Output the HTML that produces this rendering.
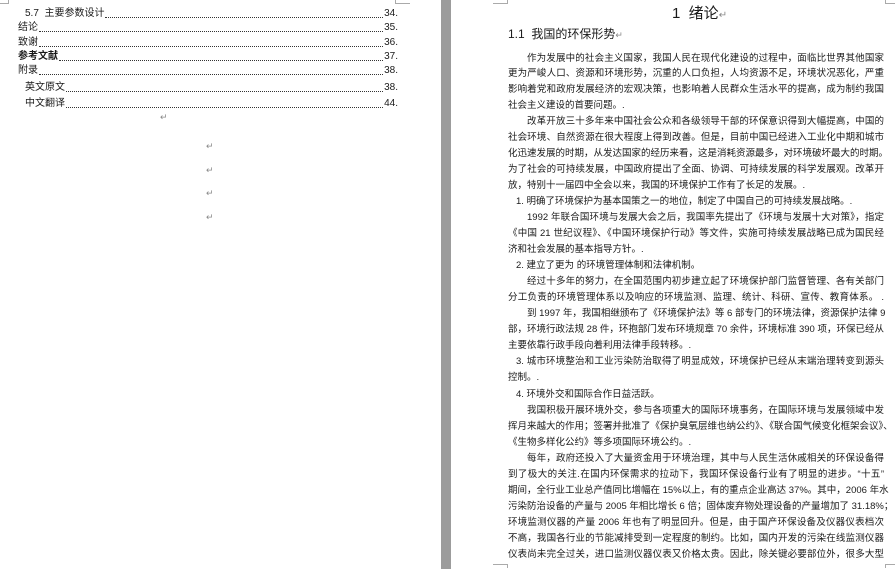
<!DOCTYPE html>
<html><head><meta charset="utf-8"><style>
body{margin:0;width:895px;height:569px;overflow:hidden;background:#fff;position:relative;font-family:"Liberation Sans","Noto Sans CJK SC",sans-serif;color:#1a1a1a}
.gap{position:absolute;left:441px;top:0;width:10px;height:569px;background:#9c9c9c}
.l{position:absolute;font-size:9.5px;line-height:12px;white-space:nowrap}
.f{text-align:justify;text-align-last:justify;width:376px;left:508px}
.fi{text-align:justify;text-align-last:justify;width:357px;left:527px}
.toc{position:absolute;display:flex;align-items:flex-end;font-size:10px;line-height:12px;right:497px;white-space:nowrap}
.toc .d{flex:1;border-bottom:1px dotted #333;margin:0 1px 2px}
.rm{position:absolute;color:#888;font-size:9px}
.c{position:absolute;border-color:#aaa;border-style:solid;width:14px;height:3px}
</style></head><body>
<div class="gap"></div>
<div class="c" style="left:0;top:0;border-width:0 1px 1px 0;width:8px"></div>
<div class="c" style="left:395px;top:0;border-width:0 0 1px 1px"></div>
<div class="c" style="left:493px;top:0;border-width:0 1px 1px 0"></div>
<div class="c" style="left:885px;top:0;border-width:0 0 1px 1px"></div>
<div class="c" style="left:493px;top:564px;border-width:1px 1px 0 0"></div>
<div class="c" style="left:885px;top:564px;border-width:1px 0 0 1px"></div>

<div class="toc" style="left:25px;top:8px"><span>5.7&nbsp; 主要参数设计</span><span class="d"></span><span>34.</span></div>
<div class="toc" style="left:18px;top:22px"><span>结论</span><span class="d"></span><span>35.</span></div>
<div class="toc" style="left:18px;top:37px"><span>致谢</span><span class="d"></span><span>36.</span></div>
<div class="toc" style="left:18px;top:51px"><span style="font-weight:bold">参考文献</span><span class="d"></span><span>37.</span></div>
<div class="toc" style="left:18px;top:65px"><span>附录</span><span class="d"></span><span>38.</span></div>
<div class="toc" style="left:25px;top:82px"><span>英文原文</span><span class="d"></span><span>38.</span></div>
<div class="toc" style="left:25px;top:98px"><span>中文翻译</span><span class="d"></span><span>44.</span></div>
<div class="rm" style="left:160px;top:112px">↵</div>
<div class="rm" style="left:206px;top:141px">↵</div>
<div class="rm" style="left:206px;top:165px">↵</div>
<div class="rm" style="left:206px;top:188px">↵</div>
<div class="rm" style="left:206px;top:212px">↵</div>

<div class="l" style="left:672px;top:5px;font-size:15px;line-height:18px">1&nbsp; 绪论<span style="color:#888;font-size:10px">↵</span></div>
<div class="l" style="left:508px;top:27px;font-size:12px;line-height:14px">1.1&nbsp; 我国的环保形势<span style="color:#888;font-size:9px">↵</span></div>

<div class="l fi" style="top:53px">作为发展中的社会主义国家，我国人民在现代化建设的过程中，面临比世界其他国家</div>
<div class="l f" style="top:68px">更为严峻人口、资源和环境形势，沉重的人口负担，人均资源不足，环境状况恶化，严重</div>
<div class="l f" style="top:84px">影响着党和政府发展经济的宏观决策，也影响着人民群众生活水平的提高，成为制约我国</div>
<div class="l" style="left:508px;top:100px">社会主义建设的首要问题。.</div>
<div class="l fi" style="top:116px">改革开放三十多年来中国社会公众和各级领导干部的环保意识得到大幅提高，中国的</div>
<div class="l f" style="top:132px">社会环境、自然资源在很大程度上得到改善。但是，目前中国已经进入工业化中期和城市</div>
<div class="l f" style="top:148px">化迅速发展的时期，从发达国家的经历来看，这是消耗资源最多，对环境破坏最大的时期。</div>
<div class="l f" style="top:164px">为了社会的可持续发展，中国政府提出了全面、协调、可持续发展的科学发展观。改革开</div>
<div class="l" style="left:508px;top:180px">放，特别十一届四中全会以来，我国的环境保护工作有了长足的发展。.</div>
<div class="l" style="left:516px;top:196px">1. 明确了环境保护为基本国策之一的地位，制定了中国自己的可持续发展战略。.</div>
<div class="l fi" style="top:212px">1992 年联合国环境与发展大会之后，我国率先提出了《环境与发展十大对策》，指定</div>
<div class="l f" style="top:228px">《中国 21 世纪议程》、《中国环境保护行动》等文件，实施可持续发展战略已成为国民经</div>
<div class="l" style="left:508px;top:244px">济和社会发展的基本指导方针。.</div>
<div class="l" style="left:516px;top:260px">2. 建立了更为 的环境管理体制和法律机制。</div>
<div class="l fi" style="top:276px">经过十多年的努力，在全国范围内初步建立起了环境保护部门监督管理、各有关部门</div>
<div class="l f" style="top:292px">分工负责的环境管理体系以及响应的环境监测、监理、统计、科研、宣传、教育体系。 .</div>
<div class="l fi" style="top:308px">到 1997 年，我国相继颁布了《环境保护法》等 6 部专门的环境法律，资源保护法律 9</div>
<div class="l f" style="top:324px">部，环境行政法规 28 件，环抱部门发布环境规章 70 余件，环境标准 390 项，环保已经从</div>
<div class="l" style="left:508px;top:340px">主要依靠行政手段向着利用法律手段转移。.</div>
<div class="l" style="left:516px;top:356px;width:368px;text-align:justify;text-align-last:justify">3. 城市环境整治和工业污染防治取得了明显成效，环境保护已经从末端治理转变到源头</div>
<div class="l" style="left:508px;top:372px">控制。.</div>
<div class="l" style="left:516px;top:389px">4. 环境外交和国际合作日益活跃。</div>
<div class="l fi" style="top:405px">我国积极开展环境外交，参与各项重大的国际环境事务，在国际环境与发展领域中发</div>
<div class="l f" style="top:421px">挥月来越大的作用；签署并批准了《保护臭氧层维也纳公约》、《联合国气候变化框架会议》、</div>
<div class="l" style="left:508px;top:437px">《生物多样化公约》等多项国际环境公约。.</div>
<div class="l fi" style="top:453px">每年，政府还投入了大量资金用于环境治理，其中与人民生活休戚相关的环保设备得</div>
<div class="l f" style="top:469px">到了极大的关注.在国内环保需求的拉动下，我国环保设备行业有了明显的进步。“十五”</div>
<div class="l f" style="top:485px">期间，全行业工业总产值同比增幅在 15%以上，有的重点企业高达 37%。其中，2006 年水</div>
<div class="l f" style="top:501px">污染防治设备的产量与 2005 年相比增长 6 倍；固体废弃物处理设备的产量增加了 31.18%；</div>
<div class="l f" style="top:517px">环境监测仪器的产量 2006 年也有了明显回升。但是，由于国产环保设备及仪器仪表档次</div>
<div class="l f" style="top:533px">不高，我国各行业的节能减排受到一定程度的制约。比如，国内开发的污染在线监测仪器</div>
<div class="l f" style="top:549px">仪表尚未完全过关，进口监测仪器仪表又价格太贵。因此，除关键必要部位外，很多大型</div>
</body></html>
